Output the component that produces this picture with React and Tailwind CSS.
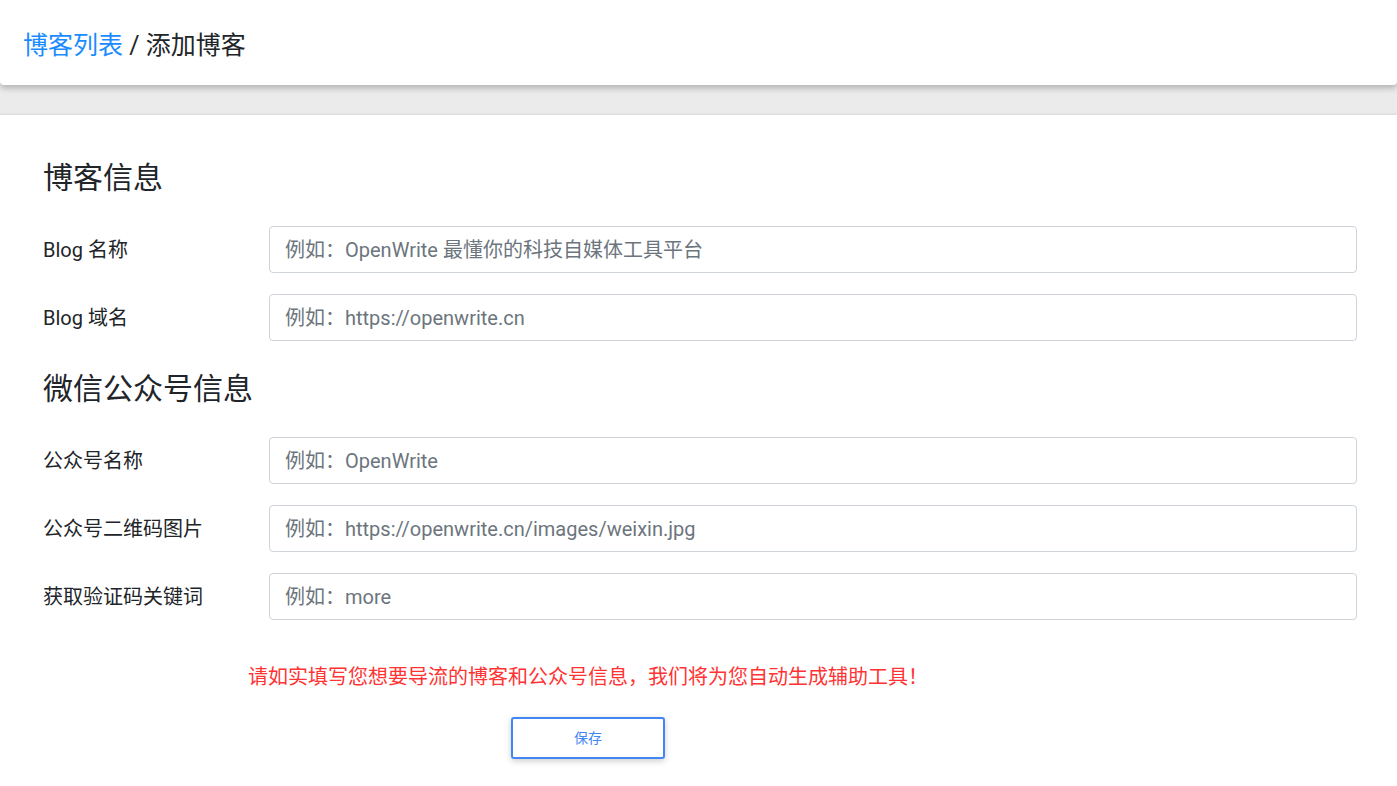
import React from "react";

const font = { fontFamily: "Roboto, 'Noto Sans CJK SC', sans-serif" };

function Row({ label, placeholder }) {
  return (
    <div className="flex items-center h-[47px]">
      <div className="w-[226px] shrink-0 text-[20px] text-[#212529] leading-[28px]">{label}</div>
      <input
        className="flex-1 h-[47px] border border-[#ced4da] rounded-[4px] px-[15px] text-[20px] text-[#495057] placeholder:text-[#6c757d] outline-none bg-white"
        placeholder={placeholder}
        style={font}
      />
    </div>
  );
}

export default function App() {
  return (
    <div className="min-h-[786px] bg-[#ebebeb]" style={font}>
      <div className="relative z-10 h-[85px] bg-white rounded-b-[4px] shadow-[0_3px_6px_rgba(0,0,0,0.25)] flex items-center pl-[23px]">
        <div className="text-[25px] leading-[32px] text-[#212529] mt-[6px]">
          <span className="text-[#1a8cff]">博客列表</span>
          <span> / 添加博客</span>
        </div>
      </div>
      <div className="h-[30px]" />
      <div className="bg-white min-h-[671px] shadow-[0_-1px_2px_rgba(0,0,0,0.08)] pt-[45px] pl-[43px] pr-[40px] pb-[27px]">
        <h2 className="text-[30px] leading-[36px] text-[#212529]">博客信息</h2>
        <div className="mt-[30px] flex flex-col gap-[21px]">
          <Row label="Blog 名称" placeholder="例如：OpenWrite 最懂你的科技自媒体工具平台" />
          <Row label="Blog 域名" placeholder="例如：https://openwrite.cn" />
        </div>
        <h2 className="mt-[30px] text-[30px] leading-[36px] text-[#212529]">微信公众号信息</h2>
        <div className="mt-[30px] flex flex-col gap-[21px]">
          <Row label="公众号名称" placeholder="例如：OpenWrite" />
          <Row label="公众号二维码图片" placeholder="例如：https://openwrite.cn/images/weixin.jpg" />
          <Row label="获取验证码关键词" placeholder="例如：more" />
        </div>
        <p className="mt-[43px] ml-[205px] text-[20px] leading-[28px] text-[#ff3333]">
          请如实填写您想要导流的博客和公众号信息，我们将为您自动生成辅助工具！
        </p>
        <button className="mt-[26px] ml-[468px] w-[154px] h-[42px] border-2 border-[#4285f4] rounded-[3px] bg-white text-[14px] text-[#4285f4] shadow-[0_2px_6px_rgba(0,0,0,0.2)]">
          保存
        </button>
      </div>
    </div>
  );
}
